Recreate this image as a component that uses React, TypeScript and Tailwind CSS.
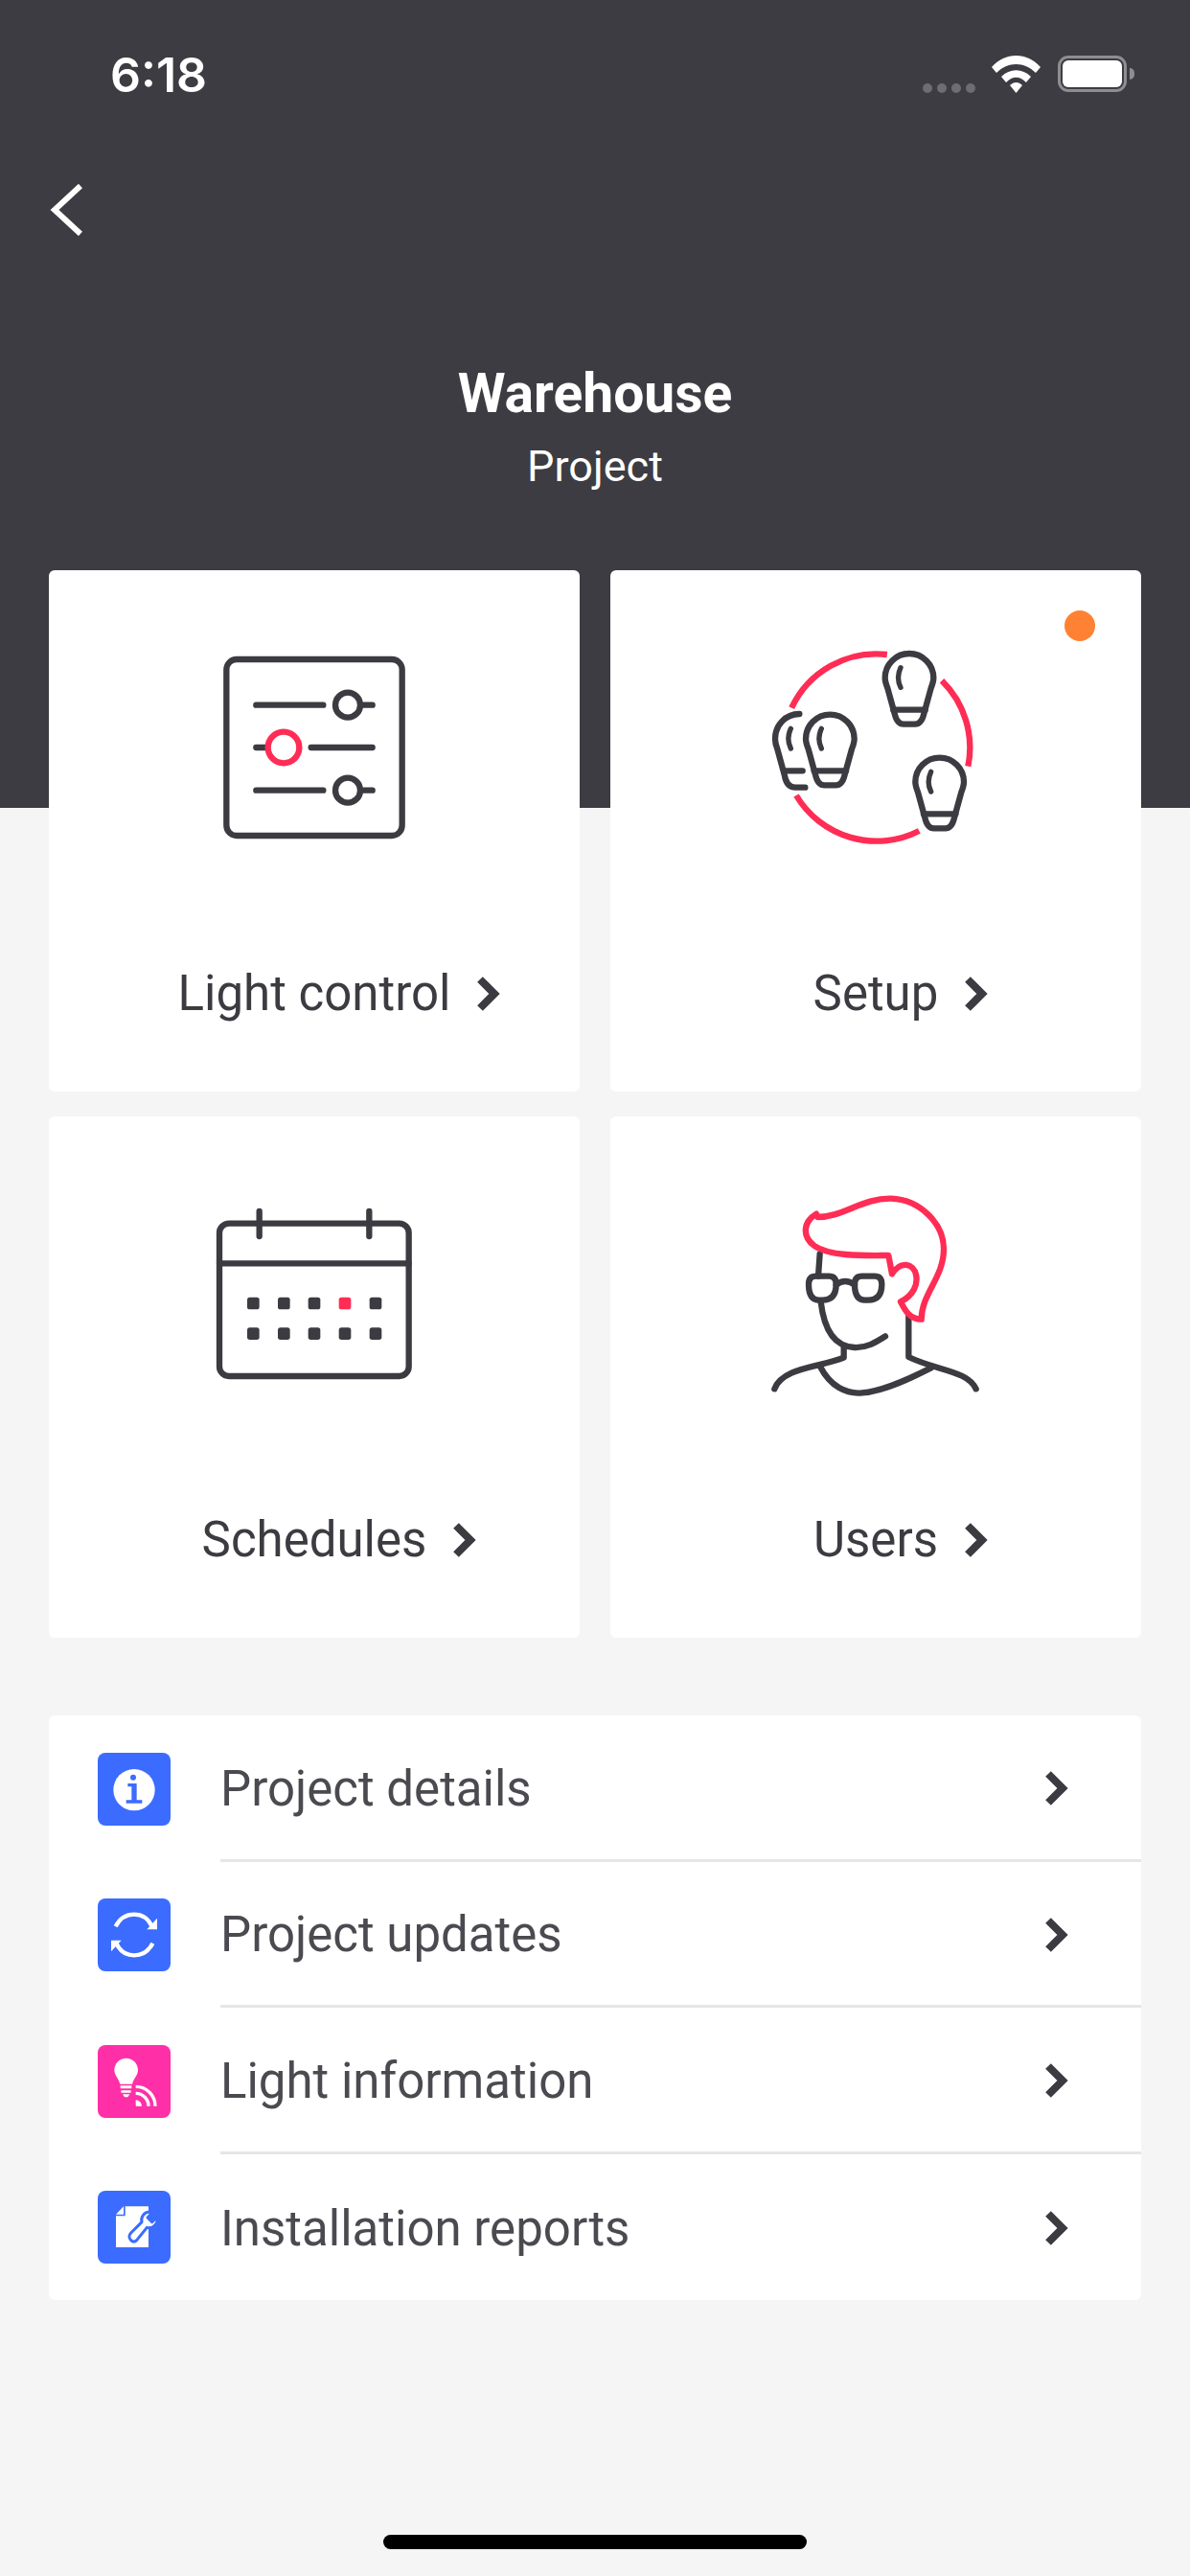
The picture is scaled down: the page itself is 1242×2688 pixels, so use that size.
import type { ReactNode } from "react";

const DARK = "#3c3b41";
const PINK = "#ff2d55";

function Chevron({ className }: { className?: string }) {
  return (
    <svg viewBox="0 0 26 36" className={className} fill="none" stroke="#3c3b41" strokeWidth="8">
      <path d="M5 3 L20 18 L5 33" />
    </svg>
  );
}

function CardIcon({ viewBox, children }: { viewBox: string; children: ReactNode }) {
  return (
    <svg
      viewBox={viewBox}
      className="h-[240px] w-[300px]"
      fill="none"
      stroke={DARK}
      strokeWidth="19"
      strokeLinecap="round"
      strokeLinejoin="round"
    >
      {children}
    </svg>
  );
}

function SlidersIcon() {
  return (
    <CardIcon viewBox="-36 45 900 720">
      <rect x="139" y="114" width="550" height="552" rx="32" />
      <path d="M232 257 H442 M570 257 H596 M232 524 H442 M570 524 H596 M232 390 H262 M404 390 H596" />
      <circle cx="519" cy="257" r="39" />
      <circle cx="519" cy="524" r="39" />
      <circle cx="318" cy="390" r="49" stroke={PINK} />
    </CardIcon>
  );
}

function Bulb({ x, y }: { x: number; y: number }) {
  return (
    <g transform={`translate(${x} ${y})`}>
      <path d="M-76 0 A76 76 0 0 1 76 0 C76 12 72 22 68 32 L46 112 C42 130 34 145 18 145 H-18 C-34 145 -42 130 -46 112 L-68 32 C-72 22 -76 12 -76 0Z" />
      <path d="M-50 100 H50" />
      <path d="M-27 -32 Q-42 0 -27 30" strokeWidth="16" />
    </g>
  );
}

function BulbsIcon() {
  return (
    <CardIcon viewBox="-48 135 900 720">
      <g stroke={PINK} strokeLinecap="butt">
        <path d="M138.500 356 A293 293 0 0 1 437.500 189" />
        <path d="M609 271 A293 293 0 0 1 691 539" />
        <path d="M538 741 A293 293 0 0 1 153 630" />
      </g>
      <path d="M163 375 C120 375 87 410 87 453 C87 465 90 475 94 485 L116 565 C120 590 132 605 150 605 H181 M122 553 H173" />
      <path d="M136 421 Q121 453 136 483" strokeWidth="16" />
      <Bulb x={259} y={453} />
      <Bulb x={507} y={262} />
      <Bulb x={602} y={588} />
    </CardIcon>
  );
}

function CalendarIcon() {
  const cols = [193, 289, 384, 480, 576];
  return (
    <CardIcon viewBox="-66 15 900 720">
      <rect x="87" y="140" width="593" height="478" rx="30" />
      <path d="M87 265 H680 M212 102 V180 M556 102 V180" />
      {[390, 485].map((y) =>
        cols.map((x) => (
          <rect
            key={`${x}-${y}`}
            x={x - 19}
            y={y - 19}
            width="38"
            height="38"
            rx="8"
            stroke="none"
            fill={x === 480 && y === 390 ? PINK : DARK}
          />
        )),
      )}
    </CardIcon>
  );
}

function UserIcon() {
  return (
    <CardIcon viewBox="-48 45 900 720">
      <path d="M227 265 L222 335" />
      <path d="M192 360 Q192 335 215 335 H255 Q278 335 278 360 C278 395 262 410 235 410 H225 C205 410 192 395 192 360Z" />
      <path d="M336 360 Q336 335 359 335 H398 Q421 335 421 360 C421 395 405 410 378 410 H368 C348 410 336 395 336 360Z" />
      <path d="M278 362 Q306 340 336 362" />
      <path d="M230 415 C240 500 270 555 335 558 C375 560 405 540 432 523" />
      <path d="M302 555 V590 C230 620 110 620 85 688" />
      <path d="M505 460 V588 C590 630 690 630 716 688" />
      <path d="M228 618 C260 680 310 705 360 700 C430 695 520 650 575 622" />
      <path
        stroke={PINK}
        d="M216 140 L220 150 C300 150 360 90 450 92 C540 95 615 170 615 250 C615 340 545 390 545 470 C510 470 495 445 480 415 C520 395 535 360 528 330 C520 295 480 285 453 328 L442 270 C380 270 260 275 210 240 C170 210 175 165 216 140Z"
      />
    </CardIcon>
  );
}

function InfoGlyph() {
  return (
    <svg viewBox="0 0 228 228" className="h-full w-full">
      <circle cx="114" cy="116" r="65" fill="#fff" />
      <circle cx="111" cy="77" r="9" fill="#3b6cff" />
      <path d="M94 96 H122 V148 H139 V158 H89 V148 H106 V106 H94Z" fill="#3b6cff" />
    </svg>
  );
}

function SyncGlyph() {
  return (
    <svg viewBox="0 0 228 228" className="h-full w-full" fill="none" stroke="#fff" strokeWidth="13">
      <path d="M56 88 C70 60 92 50 114 50 C138 50 158 62 170 88" />
      <path d="M172 140 C158 168 136 178 114 178 C90 178 70 166 58 140" />
      <path d="M186 62 V97 H154Z M42 166 V131 H74Z" fill="#fff" stroke="none" />
    </svg>
  );
}

function BulbGlyph() {
  return (
    <svg viewBox="0 0 228 228" className="h-full w-full" fill="#fff">
      <path d="M89 41 C69 41 52 57 52 78 C52 95 65 103 70 122 H108 C113 103 126 95 126 78 C126 57 109 41 89 41Z" />
      <path d="M71 127 H106 V136 H71Z M73 142 H104 V149 H73Z M78 154 H100 L94 163 H84Z" />
      <path d="M119 172 A19 19 0 0 1 138 191 H119Z" />
      <path d="M119 151 A40 40 0 0 1 159 191" fill="none" stroke="#fff" strokeWidth="10" />
      <path d="M119 130 A61 61 0 0 1 180 191" fill="none" stroke="#fff" strokeWidth="10" />
    </svg>
  );
}

function ReportGlyph() {
  return (
    <svg viewBox="0 0 228 228" className="h-full w-full" fill="#fff">
      <path d="M86 49 H159 V177 H57 V79 H86Z" />
      <path d="M57 74 L81 49 V74Z" />
      <path
        d="M104 155 C97 148 97 139 104 132 L138 98 C134 84 144 66 164 66 L172 67 L156 84 L170 98 L186 82 C190 102 174 120 154 115 L122 155 C116 161 110 161 104 155Z"
        stroke="#3b6cff"
        strokeWidth="9"
        strokeLinejoin="round"
      />
    </svg>
  );
}

const cards = [
  { label: "Light control", icon: <SlidersIcon /> },
  { label: "Setup", icon: <BulbsIcon />, dot: true },
  { label: "Schedules", icon: <CalendarIcon /> },
  { label: "Users", icon: <UserIcon /> },
];

const rows = [
  { label: "Project details", tile: "bg-[#3b6cff]", glyph: <InfoGlyph /> },
  { label: "Project updates", tile: "bg-[#3b6cff]", glyph: <SyncGlyph /> },
  { label: "Light information", tile: "bg-[#ff2fa8]", glyph: <BulbGlyph /> },
  { label: "Installation reports", tile: "bg-[#3b6cff]", glyph: <ReportGlyph /> },
];

function StatusBar() {
  return (
    <div className="flex h-[158px] items-start justify-between pl-[115px] pr-[58px] pt-[53px]">
      <span className="font-['Inter',sans-serif] text-[50px] font-semibold leading-[50px] text-white">
        6:18
      </span>
      <div className="flex items-start pt-[5px]">
        <div className="mr-[17px] mt-[29px] flex gap-[5px]">
          <span className="h-[10px] w-[10px] rounded-full bg-[#6d6d72]" />
          <span className="h-[10px] w-[10px] rounded-full bg-[#6d6d72]" />
          <span className="h-[10px] w-[10px] rounded-full bg-[#6d6d72]" />
          <span className="h-[10px] w-[10px] rounded-full bg-[#6d6d72]" />
        </div>
        <svg viewBox="0 0 51 39" className="mr-[18px] h-[39px] w-[51px]" fill="#fff">
          <path d="M0 12 C14 -4 37 -4 51 12 L46 18 C34 6 17 6 5 18Z" />
          <path d="M10 22 C19 13 32 13 41 22 L36 28 C29 21 22 21 15 28Z" />
          <path d="M19 31 C23 27 28 27 32 31 L25.500 39Z" />
        </svg>
        <div className="flex items-center">
          <div className="flex h-[38px] w-[72px] items-center justify-center rounded-[11px] border-[3px] border-[#8e8e92] p-[2px]">
            <div className="h-full w-full rounded-[6px] bg-white" />
          </div>
          <span className="ml-[3px] h-[12px] w-[5px] rounded-r-full bg-[#8e8e92]" />
        </div>
      </div>
    </div>
  );
}

export default function App() {
  return (
    <div className="flex h-[2688px] w-[1242px] flex-col overflow-hidden bg-[#f5f5f5] font-['Roboto',sans-serif]">
      <header className="h-[843px] shrink-0 bg-[#3d3c42]">
        <StatusBar />
        <div className="pl-[52px] pt-[34px]">
          <svg viewBox="0 0 34 54" className="h-[54px] w-[34px]" fill="none" stroke="#fff" strokeWidth="6">
            <path d="M32 2 L5 27 L32 52" />
          </svg>
        </div>
        <div className="pt-[133px] text-center text-white">
          <h1 className="text-[57px] font-bold leading-[64px]">Warehouse</h1>
          <p className="mt-[14px] text-[45px] leading-[60px]">Project</p>
        </div>
      </header>

      <main className="mt-[-248px] px-[51px]">
        <div className="grid grid-cols-2 gap-x-[32px] gap-y-[26px]">
          {cards.map((card) => (
            <div
              key={card.label}
              className="relative flex h-[544px] flex-col items-center rounded-[6px] bg-white pt-[70px]"
            >
              {card.dot && (
                <span className="absolute right-[48px] top-[42px] h-[32px] w-[32px] rounded-full bg-[#ff8133]" />
              )}
              {card.icon}
              <div className="mt-[102px] flex items-center gap-[26px] pl-[52px]">
                <span className="text-[51px] leading-[60px] text-[#3c3b41]">{card.label}</span>
                <Chevron className="h-[36px] w-[26px]" />
              </div>
            </div>
          ))}
        </div>

        <div className="mt-[81px] rounded-[6px] bg-white">
          {rows.map((row, index) => (
            <div key={row.label} className="flex h-[152.500px] items-center pl-[51px]">
              <div className={`mt-[1px] h-[76px] w-[76px] shrink-0 rounded-[8px] ${row.tile}`}>{row.glyph}</div>
              <div
                className={`ml-[52px] flex h-full flex-1 items-center justify-between pr-[76px] ${
                  index < rows.length - 1 ? "border-b-[3px] border-[#e6e6e6]" : ""
                }`}
              >
                <span className="mt-[4px] text-[51px] leading-[60px] text-[#4a4a50]">{row.label}</span>
                <Chevron className="mt-[3px] h-[36px] w-[26px]" />
              </div>
            </div>
          ))}
        </div>
      </main>

      <div className="mb-[28px] mt-auto flex justify-center">
        <span className="h-[15px] w-[442px] rounded-full bg-black" />
      </div>
    </div>
  );
}
